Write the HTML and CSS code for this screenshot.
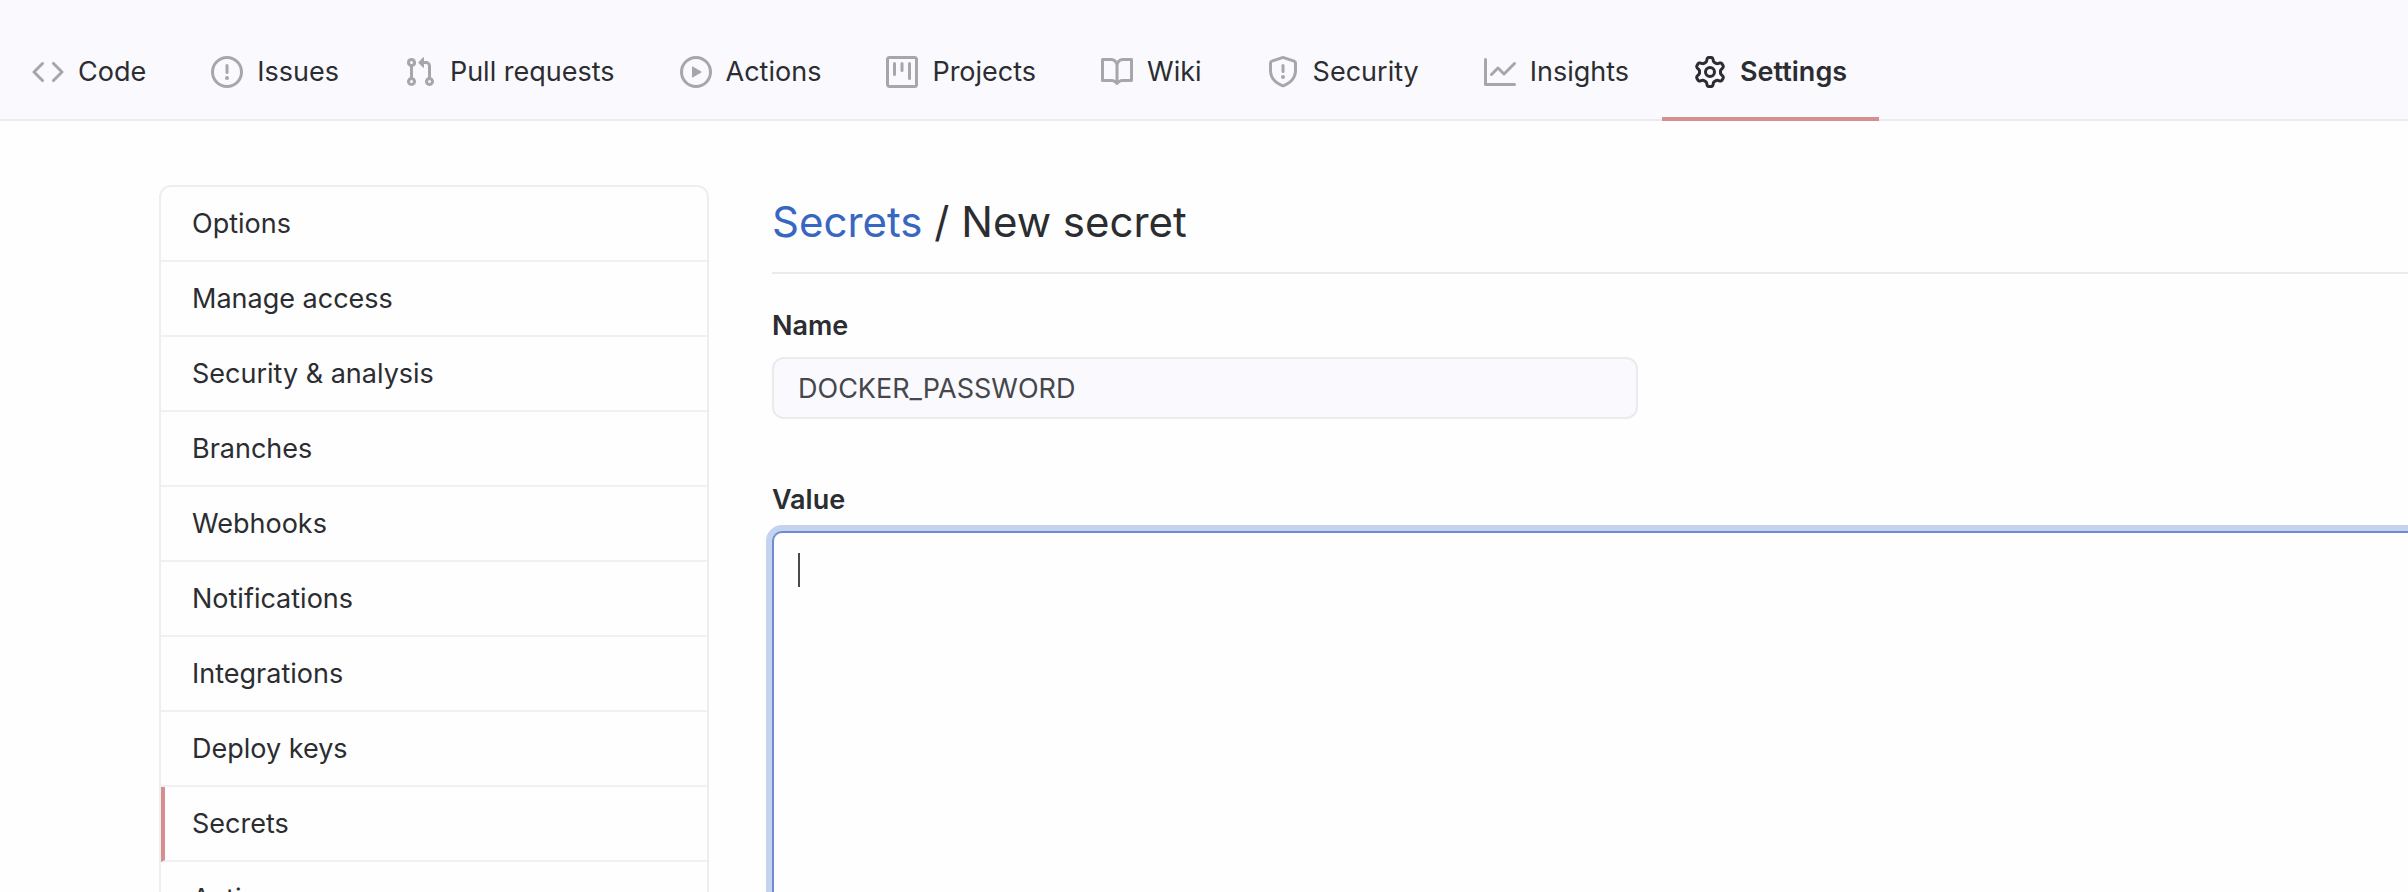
FILE: index.html
```html
<!DOCTYPE html>
<html lang="en">
<head>
<meta charset="utf-8">
<title>New secret</title>
<link rel="stylesheet" href="styles.css">
</head>
<body>
<nav class="repo-nav" aria-label="Repository">
  <a class="tab" href="#"><svg class="icon" viewBox="0 0 16 16"><path d="M4.72 3.22a.75.75 0 0 1 1.06 1.06L2.06 8l3.72 3.72a.75.75 0 1 1-1.06 1.06L.47 8.53a.75.75 0 0 1 0-1.06zm6.56 0a.75.75 0 1 0-1.06 1.06L13.94 8l-3.72 3.72a.75.75 0 1 0 1.06 1.06l4.25-4.25a.75.75 0 0 0 0-1.06z"/></svg><span>Code</span></a>
  <a class="tab" href="#"><svg class="icon" viewBox="0 0 16 16"><path fill-rule="evenodd" d="M8 1.5a6.5 6.5 0 1 0 0 13 6.5 6.5 0 0 0 0-13zM0 8a8 8 0 1 1 16 0A8 8 0 0 1 0 8zm9 3a1 1 0 1 1-2 0 1 1 0 0 1 2 0zm-.25-6.25a.75.75 0 0 0-1.5 0v3.5a.75.75 0 0 0 1.5 0z"/></svg><span>Issues</span></a>
  <a class="tab" href="#"><svg class="icon" viewBox="0 0 16 16"><path fill-rule="evenodd" d="M7.177 3.073 9.573.677A.25.25 0 0 1 10 .854v4.792a.25.25 0 0 1-.427.177L7.177 3.427a.25.25 0 0 1 0-.354zM3.75 2.5a.75.75 0 1 0 0 1.5.75.75 0 0 0 0-1.5zm-2.25.75a2.25 2.25 0 1 1 3 2.122v5.256a2.251 2.251 0 1 1-1.5 0V5.372A2.25 2.25 0 0 1 1.5 3.25zM11 2.5h-1V4h1a1 1 0 0 1 1 1v5.628a2.251 2.251 0 1 0 1.5 0V5A2.5 2.5 0 0 0 11 2.5zm1 10.25a.75.75 0 1 1 1.5 0 .75.75 0 0 1-1.5 0zM3.75 12a.75.75 0 1 0 0 1.5.75.75 0 0 0 0-1.5z"/></svg><span>Pull requests</span></a>
  <a class="tab" href="#"><svg class="icon" viewBox="0 0 16 16"><path fill-rule="evenodd" d="M1.5 8a6.5 6.5 0 1 1 13 0 6.5 6.5 0 0 1-13 0zM8 0a8 8 0 1 0 0 16A8 8 0 0 0 8 0zM6.379 5.227A.25.25 0 0 0 6 5.442v5.117a.25.25 0 0 0 .379.214l4.264-2.559a.25.25 0 0 0 0-.428z"/></svg><span>Actions</span></a>
  <a class="tab" href="#"><svg class="icon" viewBox="0 0 16 16"><path fill-rule="evenodd" d="M1.75 0A1.75 1.75 0 0 0 0 1.75v12.5C0 15.216.784 16 1.75 16h12.5A1.75 1.75 0 0 0 16 14.25V1.75A1.75 1.75 0 0 0 14.25 0zM1.5 1.75a.25.25 0 0 1 .25-.25h12.5a.25.25 0 0 1 .25.25v12.5a.25.25 0 0 1-.25.25H1.75a.25.25 0 0 1-.25-.25zM11.75 3a.75.75 0 0 0-.75.75v7.5a.75.75 0 0 0 1.5 0v-7.5a.75.75 0 0 0-.75-.75zm-8.25.75a.75.75 0 0 1 1.5 0v5.5a.75.75 0 0 1-1.5 0zM8 3a.75.75 0 0 0-.75.75v3.5a.75.75 0 0 0 1.5 0v-3.5A.75.75 0 0 0 8 3z"/></svg><span>Projects</span></a>
  <a class="tab" href="#"><svg class="icon" viewBox="0 0 16 16"><path fill-rule="evenodd" d="M0 1.75A.75.75 0 0 1 .75 1h4.253c1.227 0 2.317.59 3 1.501A3.744 3.744 0 0 1 11.006 1h4.245a.75.75 0 0 1 .75.75v10.5a.75.75 0 0 1-.75.75h-4.507a2.25 2.25 0 0 0-1.591.659l-.622.621a.75.75 0 0 1-1.06 0l-.622-.621A2.25 2.25 0 0 0 5.258 13H.75a.75.75 0 0 1-.75-.75zm8.755 3a2.25 2.25 0 0 1 2.25-2.25H14.5v9h-3.757c-.71 0-1.4.201-1.992.572zm-1.504 7.324.004-5.073-.002-2.253A2.25 2.25 0 0 0 5.003 2.5H1.5v9h3.757a3.75 3.75 0 0 1 1.994.574z"/></svg><span>Wiki</span></a>
  <a class="tab" href="#"><svg class="icon" viewBox="0 0 16 16"><path fill-rule="evenodd" d="M7.467.133a1.75 1.75 0 0 1 1.066 0l5.25 1.68A1.75 1.75 0 0 1 15 3.48V7c0 1.566-.32 3.182-1.303 4.682-.983 1.498-2.585 2.813-5.032 3.855a1.7 1.7 0 0 1-1.33 0c-2.447-1.042-4.049-2.357-5.032-3.855C1.32 10.182 1 8.566 1 7V3.48a1.75 1.75 0 0 1 1.217-1.667zm.61 1.429a.25.25 0 0 0-.153 0l-5.25 1.68a.25.25 0 0 0-.174.238V7c0 1.358.275 2.666 1.057 3.86.784 1.194 2.121 2.34 4.366 3.297a.2.2 0 0 0 .154 0c2.245-.956 3.582-2.104 4.366-3.298C13.225 9.666 13.5 8.36 13.5 7V3.48a.25.25 0 0 0-.174-.237zM9 10.5a1 1 0 1 1-2 0 1 1 0 0 1 2 0zm-.25-5.75a.75.75 0 0 0-1.5 0v3a.75.75 0 0 0 1.5 0z"/></svg><span>Security</span></a>
  <a class="tab" href="#"><svg class="icon" viewBox="0 0 16 16"><path fill-rule="evenodd" d="M1.5 1.75a.75.75 0 0 0-1.5 0v12.5c0 .414.336.75.75.75h14.5a.75.75 0 0 0 0-1.5H1.5zm14.28 2.53a.75.75 0 0 0-1.06-1.06L10 7.94 7.53 5.47a.75.75 0 0 0-1.06 0L3.22 8.72a.75.75 0 0 0 1.06 1.06L7 7.06l2.47 2.47a.75.75 0 0 0 1.06 0z"/></svg><span>Insights</span></a>
  <a class="tab tab-current" href="#" aria-current="page"><svg class="icon" viewBox="0 0 16 16"><path fill-rule="evenodd" d="M7.429 1.525a6.593 6.593 0 0 1 1.142 0c.036.003.108.036.137.146l.289 1.105c.147.56.55.967.997 1.189.174.086.341.183.501.29.417.278.97.423 1.53.27l1.102-.303c.11-.03.175.016.195.046.219.31.41.641.573.989.014.031.022.11-.059.19l-.815.806c-.411.406-.562.957-.53 1.456a4.588 4.588 0 0 1 0 .582c-.032.499.119 1.05.53 1.456l.815.806c.08.08.073.159.059.19a6.494 6.494 0 0 1-.573.99c-.02.029-.086.074-.195.045l-1.103-.303c-.559-.153-1.112-.008-1.529.27-.16.107-.327.204-.5.29-.449.222-.851.628-.998 1.189l-.289 1.105c-.029.11-.101.143-.137.146a6.613 6.613 0 0 1-1.142 0c-.036-.003-.108-.037-.137-.146l-.289-1.105c-.147-.56-.55-.967-.997-1.189a4.502 4.502 0 0 1-.501-.29c-.417-.278-.97-.423-1.53-.27l-1.102.303c-.11.03-.175-.016-.195-.046a6.492 6.492 0 0 1-.573-.989c-.014-.031-.022-.11.059-.19l.815-.806c.411-.406.562-.957.53-1.456a4.587 4.587 0 0 1 0-.582c.032-.499-.119-1.05-.53-1.456l-.815-.806c-.08-.08-.073-.159-.059-.19a6.44 6.44 0 0 1 .573-.99c.02-.029.086-.075.195-.045l1.103.303c.559.153 1.112.008 1.529-.27.16-.107.327-.204.5-.29.449-.222.851-.628.998-1.189l.289-1.105c.029-.11.101-.143.137-.146zM8 0c-.236 0-.47.01-.701.03-.743.065-1.29.615-1.458 1.261l-.29 1.106c-.017.066-.078.158-.211.224a5.994 5.994 0 0 0-.668.386c-.123.082-.233.09-.3.071L3.27 2.776c-.644-.177-1.392.02-1.82.63a7.977 7.977 0 0 0-.704 1.217c-.315.675-.111 1.422.363 1.891l.815.806c.05.048.098.147.088.294a6.084 6.084 0 0 0 0 .772c.01.147-.038.246-.088.294l-.815.806c-.474.469-.678 1.216-.363 1.891.2.428.436.835.704 1.218.428.609 1.176.806 1.82.63l1.103-.303c.066-.019.176-.011.299.071.213.143.436.272.668.386.133.066.194.158.212.224l.289 1.106c.169.646.715 1.196 1.458 1.26a8.094 8.094 0 0 0 1.402 0c.743-.064 1.29-.614 1.458-1.26l.29-1.106c.017-.066.078-.158.211-.224a5.98 5.98 0 0 0 .668-.386c.123-.082.233-.09.3-.071l1.102.302c.644.177 1.392-.02 1.82-.63.268-.382.505-.789.704-1.217.315-.675.111-1.422-.364-1.891l-.814-.806c-.05-.048-.098-.147-.088-.294a6.1 6.1 0 0 0 0-.772c-.01-.147.039-.246.088-.294l.814-.806c.475-.469.679-1.216.364-1.891a7.992 7.992 0 0 0-.704-1.218c-.428-.609-1.176-.806-1.82-.63l-1.103.303c-.066.019-.176.011-.299-.071a5.991 5.991 0 0 0-.668-.386c-.133-.066-.194-.158-.212-.224L10.16 1.29C9.99.645 9.444.095 8.701.031A8.094 8.094 0 0 0 8 0zm1.5 8a1.5 1.5 0 1 1-3 0 1.5 1.5 0 0 1 3 0zM11 8a3 3 0 1 1-6 0 3 3 0 0 1 6 0z"/></svg><span>Settings</span></a>
</nav>
<div class="layout">
  <nav class="menu" aria-label="Settings">
    <a class="menu-item" href="#">Options</a>
    <a class="menu-item" href="#">Manage access</a>
    <a class="menu-item" href="#">Security &amp; analysis</a>
    <a class="menu-item" href="#">Branches</a>
    <a class="menu-item" href="#">Webhooks</a>
    <a class="menu-item" href="#">Notifications</a>
    <a class="menu-item" href="#">Integrations</a>
    <a class="menu-item" href="#">Deploy keys</a>
    <a class="menu-item menu-item-current" href="#" aria-current="page">Secrets</a>
    <a class="menu-item" href="#">Actions</a>
  </nav>
  <main class="content">
    <h1 class="title"><a class="title-link" href="#">Secrets</a> / New secret</h1>
    <form class="form">
      <label class="label" for="name">Name</label>
      <input class="field" id="name" type="text" value="DOCKER_PASSWORD">
      <label class="label" for="value">Value</label>
      <div class="value-box">
        <textarea class="value" id="value"></textarea>
        <span class="caret"></span>
      </div>
    </form>
  </main>
</div>
</body>
</html>
```
FILE: styles.css
```css
* {
  box-sizing: border-box;
}

body {
  margin: 0;
  height: 100vh;
  overflow: hidden;
  display: flex;
  flex-direction: column;
  background: #fefefe;
  color: #2b2d31;
  font: 27px/36px Inter, "Liberation Sans", sans-serif;
}

a {
  color: inherit;
  text-decoration: none;
}

.repo-nav {
  flex: none;
  display: flex;
  gap: 1px;
  padding-top: 27px;
  background: #faf9fe;
  border-bottom: 2px solid #ebebed;
}

.tab {
  display: flex;
  align-items: center;
  gap: 14px;
  height: 94px;
  padding: 0 32px;
  margin-bottom: -2px;
  border-bottom: 4px solid transparent;
}

.tab-current {
  font-weight: 600;
  border-bottom-color: #d48f8f;
}

.icon {
  width: 32px;
  height: 32px;
  fill: #a6a6ab;
}

.tab-current .icon {
  fill: #2b2d31;
}

.layout {
  flex: 1;
  min-height: 0;
  display: flex;
  align-items: flex-start;
  gap: 63px;
  padding: 64px 0 0 159px;
}

.menu {
  flex: none;
  width: 550px;
  border: 2px solid #eeeeef;
  border-radius: 12px;
}

.menu-item {
  display: block;
  height: 75px;
  padding: 19px 31px;
  border-bottom: 2px solid #f1f1f2;
}

.menu-item-current {
  padding-left: 27px;
  border-left: 4px solid #d48f8f;
}

.content {
  flex: 1;
}

.title {
  margin: 0 0 34px;
  padding: 10px 0 23px;
  border-bottom: 2px solid #ebebed;
  font-size: 42px;
  font-weight: 400;
  line-height: 54px;
}

.title-link {
  color: #3866c0;
}

.label {
  display: block;
  margin-bottom: 13px;
  font-weight: 600;
}

.field {
  display: block;
  width: 866px;
  height: 62px;
  margin-bottom: 63px;
  padding: 0 24px;
  background: #faf9fe;
  border: 2px solid #ebebed;
  border-radius: 12px;
  color: #45474c;
  font: inherit;
}

.value-box {
  position: relative;
}

.value {
  display: block;
  width: 100%;
  height: 480px;
  padding: 16px 24px;
  resize: none;
  outline: none;
  background: #fefefe;
  border: 2px solid #6f8dcb;
  border-right: 0;
  border-radius: 10px 0 0 10px;
  box-shadow: 0 0 0 6px #c5d2f0;
  font: inherit;
}

.caret {
  position: absolute;
  top: 22px;
  left: 26px;
  width: 2px;
  height: 34px;
  background: #4a4a4c;
  pointer-events: none;
}
```
